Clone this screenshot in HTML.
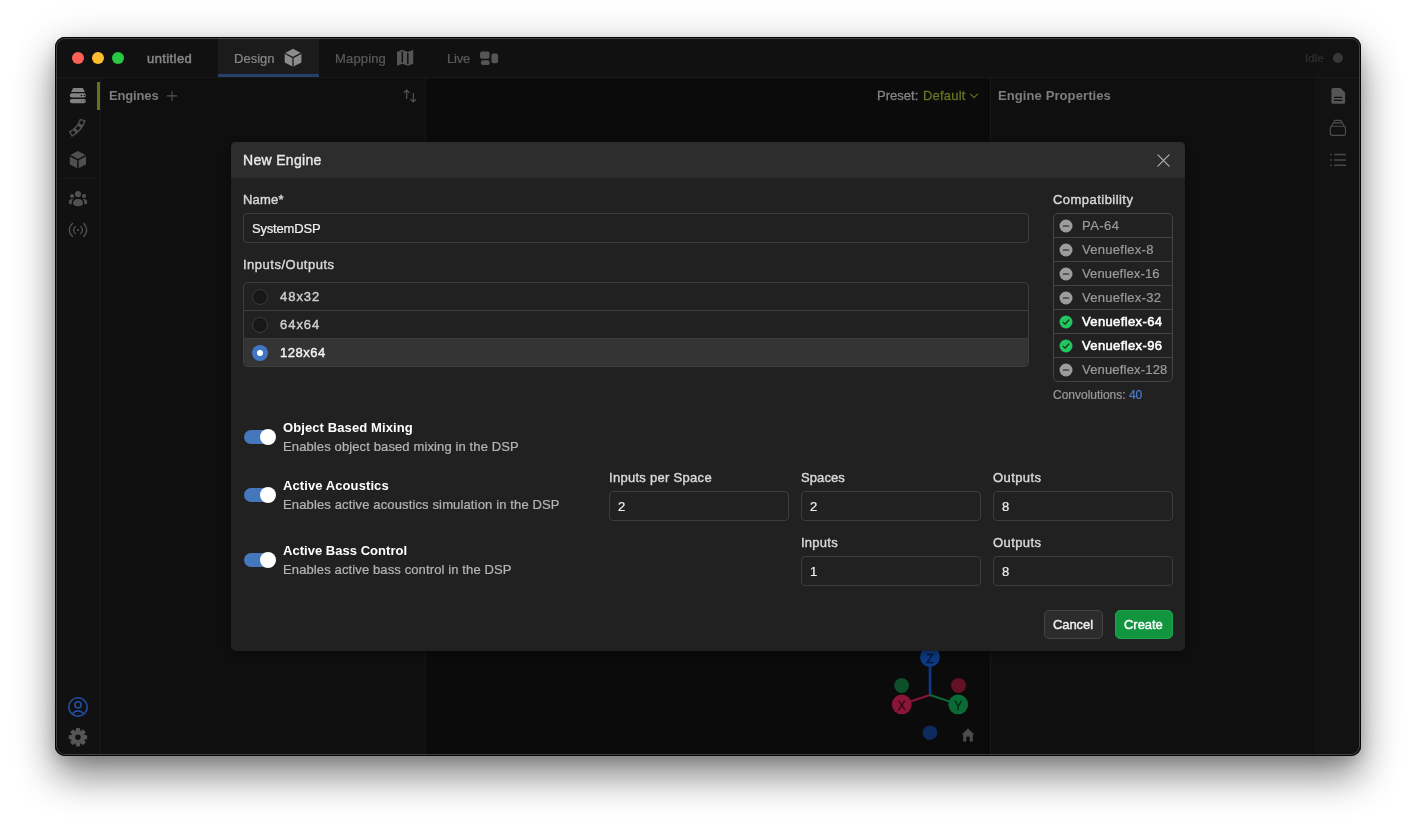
<!DOCTYPE html>
<html><head><meta charset="utf-8"><title>New Engine</title>
<style>
*{box-sizing:border-box;margin:0;padding:0}
html,body{width:1416px;height:829px;background:#fff;overflow:hidden}
body{font-family:"Liberation Sans",sans-serif;position:relative;-webkit-font-smoothing:antialiased}
.win{position:absolute;left:55px;top:37px;width:1306px;height:719px;border-radius:10px;background:#111;overflow:hidden;box-shadow:0 21px 38px rgba(0,0,0,.44),0 5px 14px rgba(0,0,0,.14),0 0 50px rgba(0,0,0,.08)}
.pg{will-change:transform;position:absolute;left:-55px;top:-37px;width:1416px;height:829px}
.a{position:absolute}
.t{position:absolute;margin-top:1px;-webkit-text-stroke:.22px;white-space:nowrap;line-height:16px;font-size:13px}
.b{font-weight:bold;-webkit-text-stroke:0}
.m{-webkit-text-stroke:.4px}
.inp{border:1px solid #3d3d3d;border-radius:4px;background:#212121}
.rim{position:absolute;left:55px;top:37px;width:1306px;height:719px;border-radius:10px;box-shadow:inset 0 0 0 1px #050505,inset 0 0 0 2px rgba(255,255,255,.2);pointer-events:none}
</style></head><body>
<div class="win"><div class="pg">
<!-- titlebar -->
<div class="a" style="left:55px;top:37px;width:1306px;height:40px;background:#111"></div>
<div class="a" style="left:1315px;top:38px;width:46px;height:718px;background:#121212"></div>
<div class="a" style="left:55px;top:77px;width:1306px;height:1px;background:#191919"></div>
<div class="a" style="left:72px;top:52px;width:12px;height:12px;border-radius:50%;background:#fe5f57"></div>
<div class="a" style="left:92px;top:52px;width:12px;height:12px;border-radius:50%;background:#febc2e"></div>
<div class="a" style="left:112px;top:52px;width:12px;height:12px;border-radius:50%;background:#28c840"></div>
<div class="t" id="t_untitled" style="letter-spacing:0.41px;-webkit-text-stroke:.5px;left:147px;top:50px;color:#868686">untitled</div>
<div class="a" style="left:218px;top:38px;width:101px;height:39px;background:#1b1b1b"></div>
<div class="a" style="left:218px;top:74px;width:101px;height:3px;background:#264069"></div>
<div class="t" id="t_design" style="letter-spacing:0.02px;left:234px;top:50px;color:#888">Design</div>
<div class="t" id="t_mapping" style="letter-spacing:0.16px;left:335px;top:50px;color:#5a5a5a">Mapping</div>
<div class="t" id="t_live" style="letter-spacing:-0.21px;left:447px;top:50px;color:#5a5a5a">Live</div>
<div class="t" id="t_idle" style="letter-spacing:0.01px;left:1305px;top:49px;color:#313131;font-size:11.5px">Idle</div>
<div class="a" style="left:1332.7px;top:52.8px;width:10.5px;height:10.5px;border-radius:50%;background:#383838"></div>
<!-- left sidebar -->
<div class="a" style="left:55px;top:78px;width:42px;height:678px;background:#111"></div>
<div class="a" style="left:97px;top:82px;width:3px;height:28px;background:#6a6f1d"></div>
<div class="a" style="left:60px;top:178px;width:36px;height:1px;background:#1a1a1a"></div>
<!-- left panel -->
<div class="a" style="left:100px;top:78px;width:326px;height:678px;background:#0f0f0f;border-right:1px solid #171717;border-left:1px solid #181818"></div>
<div class="t b" id="t_engines" style="letter-spacing:-0.15px;left:109px;top:87px;color:#7d7d7d">Engines</div>
<!-- canvas -->
<div class="a" style="left:426px;top:78px;width:564px;height:678px;background:#0b0b0b"></div>
<div class="t" id="t_preset" style="letter-spacing:0.02px;-webkit-text-stroke:.3px;left:877px;top:87px;color:#848484">Preset:</div>
<div class="t" id="t_default" style="letter-spacing:0.19px;-webkit-text-stroke:.3px;left:923px;top:87px;color:#687420">Default</div>
<!-- right panel -->
<div class="a" style="left:990px;top:78px;width:325px;height:678px;background:#0f0f0f;border-left:1px solid #181818"></div>
<div class="t b" id="t_engprop" style="letter-spacing:0.1px;left:998px;top:87px;color:#7d7d7d">Engine Properties</div>

<!-- icons: one page-sized svg -->
<svg class="a" style="left:0;top:0" width="1416" height="829" viewBox="0 0 1416 829" fill="none">
 <!-- tab cube -->
 <g fill="#8c8c8c"><path d="M293 48.8 L301.4 53.2 L301.4 62.6 L293 66.8 L284.7 62.6 L284.7 53.2 Z"/></g>
 <path d="M293 66.8 V57.6 M293 57.6 L284.7 53.2 M293 57.6 L301.4 53.2" stroke="#1b1b1b" stroke-width="1.3"/>
 <!-- tab map -->
 <path d="M397 52 L402.3 49.8 L407.8 51.9 L413.2 49.8 V63.7 L407.8 65.8 L402.3 63.7 L397 65.8 Z" fill="#555"/>
 <path d="M402.3 51.6 V62.6 M407.8 53 V64.2" stroke="#111" stroke-width="1.5"/>
 <!-- tab live -->
 <g fill="#555"><rect x="480" y="51.5" width="9.6" height="7.2" rx="2"/><rect x="481" y="60.2" width="8.6" height="4.9" rx="1.8"/><rect x="491.4" y="53.4" width="6.7" height="9.8" rx="2"/></g>
 <!-- server -->
 <g fill="#828282"><path d="M73.2 87.9 H82.8 L85 91.9 H71 Z"/><rect x="69.8" y="93.3" width="16.2" height="4.2" rx="2.1"/><rect x="69.8" y="99" width="16.2" height="4.2" rx="2.1"/></g>
 <g fill="#111"><circle cx="81.5" cy="95.5" r=".8"/><circle cx="84.5" cy="95.5" r=".8"/></g><g fill="#505050"><circle cx="81.5" cy="101.1" r=".8"/><circle cx="84.5" cy="101.1" r=".8"/></g>
 <!-- line array -->
 <path d="M82.9 119.6 A25 25 0 0 1 70.35 134.2" stroke="#505050" stroke-width="6.2"/>
 <path d="M82.9 119.6 A25 25 0 0 1 70.35 134.2" stroke="#111" stroke-width="3.2" stroke-dasharray="3.7 2.9" stroke-dashoffset="-1.45"/>
 <!-- cube -->
 <path d="M77.9 151 L86 155.3 V164.4 L77.9 168.6 L69.8 164.4 V155.3 Z" fill="#4f4f4f"/>
 <path d="M77.9 168.6 V159.8 M77.9 159.8 L69.8 155.5 M77.9 159.8 L86 155.5" stroke="#111" stroke-width="1.5"/>
 <!-- users -->
 <g fill="#505050"><circle cx="78" cy="194" r="3.1"/><circle cx="72" cy="196" r="2.1"/><circle cx="84" cy="196" r="2.1"/>
  <path d="M73 203.4 C73 197.6 83 197.6 83 203.4 C83 207.1 73 207.1 73 203.4 Z"/>
  <path d="M73.2 199.1 C70 198.6 68.7 200.6 68.7 202.4 C68.7 203.8 70.2 204.4 71.8 204.3 C71.3 202.5 71.8 200.6 73.2 199.1 Z"/>
  <path d="M82.8 199.1 C86 198.6 87.3 200.6 87.3 202.4 C87.3 203.8 85.8 204.4 84.2 204.3 C84.7 202.5 84.2 200.6 82.8 199.1 Z"/>
 </g>
 <!-- broadcast -->
 <g stroke="#4e4e4e" stroke-width="1.35" stroke-linecap="round">
  <path d="M72.47 223.41 A8.6 8.6 0 0 0 72.47 236.59"/><path d="M83.53 223.41 A8.6 8.6 0 0 1 83.53 236.59"/>
  <path d="M75.29 226.53 A4.4 4.4 0 0 0 75.29 233.47"/><path d="M80.71 226.53 A4.4 4.4 0 0 1 80.71 233.47"/>
 </g>
 <rect x="77" y="229.1" width="2" height="1.9" fill="#4e4e4e"/>
 <!-- user circle -->
 <g stroke="#2450a8" stroke-width="1.5"><circle cx="78" cy="707" r="9.2"/><circle cx="78" cy="704.8" r="3.1"/>
  <path d="M72.3 713.6 Q78 708.2 83.7 713.6"/></g>
 <!-- gear -->
 <g transform="translate(78 737.2)"><g fill="#555"><circle r="6.9"/>
  <rect x="-2.2" y="-9.2" width="4.4" height="18.4" rx="1.1"/><rect x="-2.2" y="-9.2" width="4.4" height="18.4" rx="1.1" transform="rotate(45)"/><rect x="-2.2" y="-9.2" width="4.4" height="18.4" rx="1.1" transform="rotate(90)"/><rect x="-2.2" y="-9.2" width="4.4" height="18.4" rx="1.1" transform="rotate(135)"/></g><circle r="2.7" fill="#111"/></g>
 <!-- plus / sort -->
 <path d="M167 95.9 H177 M172 90.9 V100.9" stroke="#555" stroke-width="1.1"/>
 <path d="M406.7 98.9 V90.2 M403.9 92.9 L406.7 90.1 L409.5 92.9 M413.3 93.1 V101.8 M410.5 99.1 L413.3 101.9 L416.1 99.1" stroke="#585858" stroke-width="1.1"/>
 <!-- chevron -->
 <path d="M970.6 94.2 L974.1 97.6 L977.6 94.2" stroke="#687420" stroke-width="1.1" stroke-linecap="round" stroke-linejoin="round"/>
 <!-- right icons -->
 <path d="M1333 88 H1340.4 L1345.1 92.7 V102.3 Q1345.1 103.8 1343.6 103.8 H1333 Q1331.4 103.8 1331.4 102.3 V89.6 Q1331.4 88 1333 88 Z" fill="#555"/>
 <path d="M1334 97.4 H1342.4 M1334 100.3 H1342.4" stroke="#121212" stroke-width="1.2"/>
 <g stroke="#4e4e4e" stroke-width="1.15" stroke-linejoin="round"><rect x="1330.3" y="126.2" width="15.2" height="9.2" rx="2.2"/><path d="M1331.6 126 L1333.4 122.8 H1342.4 L1344.2 126 M1333.6 122.6 L1334.6 120.4 H1341.2 L1342.2 122.6"/></g>
 <path d="M1334.2 154.4 H1346 M1334.2 159.9 H1346 M1334.2 165.3 H1346 M1330 154.4 H1331.6 M1330 159.9 H1331.6 M1330 165.3 H1331.6" stroke="#484848" stroke-width="1.5"/>
 <!-- gizmo -->
 <path d="M930 695 V657" stroke="#0e3a86" stroke-width="2.6"/>
 <path d="M930 695 L902 704.4" stroke="#8a1538" stroke-width="2"/>
 <path d="M930 695 L958 704.4" stroke="#0a6b36" stroke-width="2"/>
 <circle cx="930" cy="657" r="9.9" fill="#0e3a86"/>
 <circle cx="901.8" cy="704.4" r="9.9" fill="#8a1538"/>
 <circle cx="958.2" cy="704.4" r="9.9" fill="#0a6b36"/>
 <circle cx="901.6" cy="685.5" r="7.4" fill="#0c4f29"/>
 <circle cx="958.5" cy="685.5" r="7.4" fill="#631226"/>
 <circle cx="930" cy="732.7" r="7.3" fill="#0f2a5e"/>
 <text x="930" y="663" font-family="Liberation Sans, sans-serif" font-size="12" text-anchor="middle" fill="#071737" stroke="#071737" stroke-width=".35">Z</text>
 <text x="901.8" y="710.2" font-family="Liberation Sans, sans-serif" font-size="12" text-anchor="middle" fill="#330814" stroke="#330814" stroke-width=".35">X</text>
 <text x="958.2" y="710.2" font-family="Liberation Sans, sans-serif" font-size="12" text-anchor="middle" fill="#042713" stroke="#042713" stroke-width=".35">Y</text>
 <!-- home -->
 <path d="M968 728.6 L974.4 734.8 H972.8 V741.4 H969.7 V737.6 Q969.7 736.4 968 736.4 Q966.3 736.4 966.3 737.6 V741.4 H963.2 V734.8 H961.6 Z" fill="#4c4c4c"/>
</svg>
<!-- dialog -->
<div class="a" id="dlg" style="left:231px;top:142px;width:954px;height:509px;background:#212121;border-radius:5px;overflow:hidden;box-shadow:0 3px 10px rgba(0,0,0,.35)">
 <div class="a" style="left:0;top:0;width:954px;height:36px;background:#2d2d2d"></div>
</div>
<!-- dialog content (page coords) -->
<div class="t m" id="t_newengine" style="letter-spacing:0.31px;left:243px;top:151px;font-size:14px;color:#e8e8e8">New Engine</div>
<svg class="a" style="left:1156.5px;top:153.5px" width="13" height="13" viewBox="0 0 13 13"><path d="M.9 .9 L12.1 12.1 M12.1 .9 L.9 12.1" stroke="#b4b4b4" stroke-width="1.15" fill="none" stroke-linecap="round"/></svg>
<div class="t m" id="t_name" style="letter-spacing:0.19px;left:243px;top:191px;color:#d8d8d8">Name*</div>
<div class="a inp" style="left:243px;top:213px;width:786px;height:30px"></div>
<div class="t" id="t_sysdsp" style="letter-spacing:-0.19px;left:252px;top:220px;color:#f0f0f0">SystemDSP</div>
<div class="t m" id="t_io" style="letter-spacing:0.5px;left:243px;top:256px;color:#d8d8d8">Inputs/Outputs</div>
<div class="a" style="left:243px;top:282px;width:786px;height:85px;border:1px solid #3d3d3d;border-radius:4px;overflow:hidden">
  <div class="a" style="left:0;top:27px;width:100%;height:1px;background:#3d3d3d"></div>
  <div class="a" style="left:0;top:55px;width:100%;height:29px;background:#343434;border-top:1px solid #3d3d3d"></div>
</div>
<div class="a" style="left:252px;top:289px;width:16px;height:16px;border-radius:50%;background:#181818;border:1px solid #3a3a3a"></div>
<div class="a" style="left:252px;top:317px;width:16px;height:16px;border-radius:50%;background:#181818;border:1px solid #3a3a3a"></div>
<div class="a" style="left:252px;top:345px;width:16px;height:16px;border-radius:50%;background:#4175c6"></div>
<div class="a" style="left:256.75px;top:349.75px;width:6.5px;height:6.5px;border-radius:50%;background:#fff"></div>
<div class="t m" id="t_48" style="letter-spacing:0.96px;left:280px;top:288px;color:#cfcfcf">48x32</div>
<div class="t m" id="t_64" style="letter-spacing:0.96px;left:280px;top:316px;color:#cfcfcf">64x64</div>
<div class="t m" id="t_128" style="letter-spacing:0.52px;left:280px;top:344px;color:#f4f4f4">128x64</div>
<!-- compat -->
<div class="t m" id="t_compat" style="letter-spacing:0.46px;left:1053px;top:191px;color:#d8d8d8">Compatibility</div>
<div class="a" style="left:1053px;top:213px;width:120px;height:169px;border:1px solid #444;border-radius:5px"></div>
<svg class="a" style="left:1059px;top:218.5px" width="14" height="14" viewBox="0 0 14 14"><circle cx="7" cy="7" r="6.5" fill="#9c9c9c"/><path d="M4.3 7 H9.7" stroke="#454545" stroke-width="1.5" fill="none" stroke-linecap="round"/></svg>
<div class="t" id="t_c0" style="letter-spacing:0.45px;left:1082px;top:216.5px;color:#9a9a9a">PA-64</div>
<div class="a" style="left:1054px;top:237.0px;width:118px;height:1px;background:#444"></div>
<svg class="a" style="left:1059px;top:242.5px" width="14" height="14" viewBox="0 0 14 14"><circle cx="7" cy="7" r="6.5" fill="#9c9c9c"/><path d="M4.3 7 H9.7" stroke="#454545" stroke-width="1.5" fill="none" stroke-linecap="round"/></svg>
<div class="t" id="t_c1" style="letter-spacing:0.28px;left:1082px;top:240.5px;color:#9a9a9a">Venueflex-8</div>
<div class="a" style="left:1054px;top:261.0px;width:118px;height:1px;background:#444"></div>
<svg class="a" style="left:1059px;top:266.5px" width="14" height="14" viewBox="0 0 14 14"><circle cx="7" cy="7" r="6.5" fill="#9c9c9c"/><path d="M4.3 7 H9.7" stroke="#454545" stroke-width="1.5" fill="none" stroke-linecap="round"/></svg>
<div class="t" id="t_c2" style="letter-spacing:0.15px;left:1082px;top:264.5px;color:#9a9a9a">Venueflex-16</div>
<div class="a" style="left:1054px;top:285.0px;width:118px;height:1px;background:#444"></div>
<svg class="a" style="left:1059px;top:290.5px" width="14" height="14" viewBox="0 0 14 14"><circle cx="7" cy="7" r="6.5" fill="#9c9c9c"/><path d="M4.3 7 H9.7" stroke="#454545" stroke-width="1.5" fill="none" stroke-linecap="round"/></svg>
<div class="t" id="t_c3" style="letter-spacing:0.28px;left:1082px;top:288.5px;color:#9a9a9a">Venueflex-32</div>
<div class="a" style="left:1054px;top:309.0px;width:118px;height:1px;background:#444"></div>
<svg class="a" style="left:1059px;top:314.5px" width="14" height="14" viewBox="0 0 14 14"><circle cx="7" cy="7" r="6.5" fill="#22c55e"/><path d="M4.2 7.3 L6.2 9.2 L9.8 5" stroke="#12301c" stroke-width="1.25" fill="none" stroke-linecap="round" stroke-linejoin="round"/></svg>
<div class="t" id="t_c4" style="letter-spacing:0.37px;-webkit-text-stroke:.55px;left:1082px;top:312.5px;color:#fff">Venueflex-64</div>
<div class="a" style="left:1054px;top:333.0px;width:118px;height:1px;background:#444"></div>
<svg class="a" style="left:1059px;top:338.5px" width="14" height="14" viewBox="0 0 14 14"><circle cx="7" cy="7" r="6.5" fill="#22c55e"/><path d="M4.2 7.3 L6.2 9.2 L9.8 5" stroke="#12301c" stroke-width="1.25" fill="none" stroke-linecap="round" stroke-linejoin="round"/></svg>
<div class="t" id="t_c5" style="letter-spacing:0.37px;-webkit-text-stroke:.55px;left:1082px;top:336.5px;color:#fff">Venueflex-96</div>
<div class="a" style="left:1054px;top:357.0px;width:118px;height:1px;background:#444"></div>
<svg class="a" style="left:1059px;top:362.5px" width="14" height="14" viewBox="0 0 14 14"><circle cx="7" cy="7" r="6.5" fill="#9c9c9c"/><path d="M4.3 7 H9.7" stroke="#454545" stroke-width="1.5" fill="none" stroke-linecap="round"/></svg>
<div class="t" id="t_c6" style="letter-spacing:0.18px;left:1082px;top:360.5px;color:#9a9a9a">Venueflex-128</div>
<div class="t" id="t_conv" style="letter-spacing:-0.01px;left:1053px;top:386px;font-size:12px;color:#9a9a9a">Convolutions: <span style="color:#4a7fd0">40</span></div>
<div class="a" style="left:243.7px;top:430px;width:30.3px;height:14px;border-radius:7px;background:#4577bd"></div>
<div class="a" style="left:260px;top:429px;width:16px;height:16px;border-radius:50%;background:#fff"></div>
<div class="t b" id="t_obm" style="letter-spacing:0.1px;left:283px;top:419.0px;color:#fff">Object Based Mixing</div>
<div class="t" id="t_obmd" style="letter-spacing:0.12px;left:283px;top:438.0px;color:#b4b4b4">Enables object based mixing in the DSP</div>
<div class="a" style="left:243.7px;top:488px;width:30.3px;height:14px;border-radius:7px;background:#4577bd"></div>
<div class="a" style="left:260px;top:487px;width:16px;height:16px;border-radius:50%;background:#fff"></div>
<div class="t b" id="t_aa" style="letter-spacing:0.09px;left:283px;top:477px;color:#fff">Active Acoustics</div>
<div class="t" id="t_aad" style="letter-spacing:0.14px;left:283px;top:496px;color:#b4b4b4">Enables active acoustics simulation in the DSP</div>
<div class="a" style="left:243.7px;top:553px;width:30.3px;height:14px;border-radius:7px;background:#4577bd"></div>
<div class="a" style="left:260px;top:552px;width:16px;height:16px;border-radius:50%;background:#fff"></div>
<div class="t b" id="t_abc" style="letter-spacing:0.03px;left:283px;top:542.0px;color:#fff">Active Bass Control</div>
<div class="t" id="t_abcd" style="letter-spacing:0.12px;left:283px;top:561.0px;color:#b4b4b4">Enables active bass control in the DSP</div>

<div class="t m" id="t_ips" style="letter-spacing:0.29px;left:609px;top:469px;color:#d8d8d8">Inputs per Space</div>
<div class="a inp" style="left:609px;top:491px;width:180px;height:30px"></div>
<div class="t" id="t_ipsv" style="left:618px;top:498px;color:#f0f0f0">2</div>
<div class="t m" id="t_sp" style="letter-spacing:0.1px;left:801px;top:469px;color:#d8d8d8">Spaces</div>
<div class="a inp" style="left:801px;top:491px;width:180px;height:30px"></div>
<div class="t" id="t_spv" style="left:810px;top:498px;color:#f0f0f0">2</div>
<div class="t m" id="t_o1" style="letter-spacing:0.4px;left:993px;top:469px;color:#d8d8d8">Outputs</div>
<div class="a inp" style="left:993px;top:491px;width:180px;height:30px"></div>
<div class="t" id="t_o1v" style="left:1002px;top:498px;color:#f0f0f0">8</div>
<div class="t m" id="t_in" style="letter-spacing:0.26px;left:801px;top:534px;color:#d8d8d8">Inputs</div>
<div class="a inp" style="left:801px;top:556px;width:180px;height:30px"></div>
<div class="t" id="t_inv" style="left:810px;top:563px;color:#f0f0f0">1</div>
<div class="t m" id="t_o2" style="letter-spacing:0.4px;left:993px;top:534px;color:#d8d8d8">Outputs</div>
<div class="a inp" style="left:993px;top:556px;width:180px;height:30px"></div>
<div class="t" id="t_o2v" style="left:1002px;top:563px;color:#f0f0f0">8</div>

<!-- buttons -->
<div class="a" style="left:1044px;top:610px;width:59px;height:29px;background:#2c2c2c;border:1px solid #454545;border-radius:5px"></div>
<div class="t m" id="t_cancel" style="letter-spacing:-0.08px;left:1053px;top:616px;color:#f0f0f0">Cancel</div>
<div class="a" style="left:1115px;top:610px;width:58px;height:29px;background:#11963f;border:1px solid #1ca64d;border-radius:5px"></div>
<div class="t m" id="t_create" style="letter-spacing:-0.04px;left:1124px;top:616px;color:#fff">Create</div>

</div></div>
<div class="rim"></div>
</body></html>
